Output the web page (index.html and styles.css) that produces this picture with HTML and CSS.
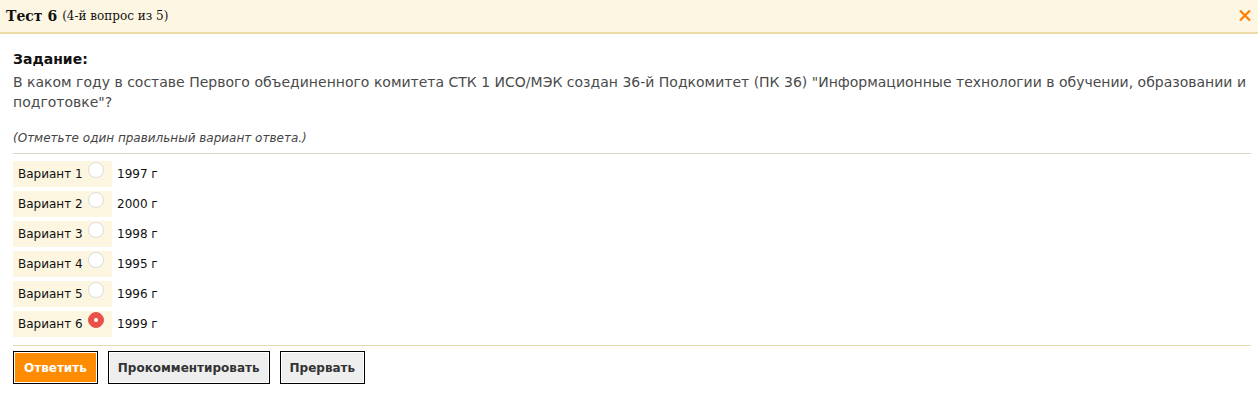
FILE: index.html
```html
<!DOCTYPE html>
<html lang="ru">
<head>
    <meta charset="UTF-8">
    <title>Тест 6</title>
    <link rel="stylesheet" href="styles.css">
</head>
<body>
    <div class="header">
        <span class="title">Тест 6</span>
        <span class="subtitle">(4-й вопрос из 5)</span>
        <svg class="close" width="12" height="11" viewBox="0 0 12 11"><path d="M1 0.5 L11 10.5 M11 0.5 L1 10.5" stroke="#ff8000" stroke-width="2.2"/></svg>
    </div>

    <div class="content">
        <div class="task-label">Задание:</div>
        <p class="question">В каком году в составе Первого объединенного комитета СТК 1 ИСО/МЭК создан 36-й Подкомитет (ПК 36) "Информационные технологии в обучении, образовании и подготовке"?</p>
        <p class="note">(Отметьте один правильный вариант ответа.)</p>

        <div class="options">
            <label class="option"><span class="variant">Вариант 1 <span class="radio"></span></span><span class="answer">1997 г</span></label>
            <label class="option"><span class="variant">Вариант 2 <span class="radio"></span></span><span class="answer">2000 г</span></label>
            <label class="option"><span class="variant">Вариант 3 <span class="radio"></span></span><span class="answer">1998 г</span></label>
            <label class="option"><span class="variant">Вариант 4 <span class="radio"></span></span><span class="answer">1995 г</span></label>
            <label class="option"><span class="variant">Вариант 5 <span class="radio"></span></span><span class="answer">1996 г</span></label>
            <label class="option"><span class="variant">Вариант 6 <span class="radio checked"></span></span><span class="answer">1999 г</span></label>
        </div>

        <div class="buttons">
            <button class="btn primary">Ответить</button>
            <button class="btn">Прокомментировать</button>
            <button class="btn">Прервать</button>
        </div>
    </div>
</body>
</html>
```

FILE: styles.css
```css
body {
    margin: 0;
    font-family: "DejaVu Sans", sans-serif;
    background: #fff;
}
.header {
    height: 32px;
    background-color: #fdf6e3;
    border-bottom: 2px solid #ecdcaa;
    display: flex;
    align-items: center;
    padding: 0 7px 0 6px;
    font-family: "DejaVu Serif", serif;
    color: #111;
}
.title {
    font-weight: bold;
    font-size: 14px;
    margin-right: 5px;
}
.subtitle {
    font-size: 12px;
}
.close {
    margin-left: auto;
    margin-top: -1px;
}
.content {
    padding: 15px 7px 0 13px;
}
.task-label {
    font-weight: bold;
    font-size: 14px;
    color: #111;
    line-height: 20px;
}
.question {
    margin: 3px 0 0;
    font-size: 14px;
    line-height: 20px;
    color: #4a4a4a;
}
.note {
    margin: 18px 0 0;
    font-size: 12px;
    font-style: italic;
    color: #444;
    line-height: 16px;
    padding-bottom: 7px;
    border-bottom: 1px solid #dcd6c8;
}
.options {
    padding: 7px 0 8px;
    border-bottom: 1px solid #e8dab0;
}
.option {
    display: flex;
    align-items: center;
    height: 26px;
    margin-bottom: 4px;
    font-size: 12px;
    color: #111;
}
.option:last-child {
    margin-bottom: 0;
}
.variant {
    display: flex;
    align-items: center;
    width: 94px;
    height: 26px;
    padding-left: 5px;
    background-color: #fcf5e0;
}
.radio {
    display: inline-block;
    width: 14px;
    height: 14px;
    margin: -8px 0 0 5px;
    border: 1px solid #dcdcdc;
    border-radius: 50%;
    background: #fff;
    position: relative;
}
.radio.checked {
    background: #e8524b;
    border-color: #e8524b;
}
.radio.checked::after {
    content: "";
    position: absolute;
    left: 5px;
    top: 5px;
    width: 4px;
    height: 4px;
    border-radius: 50%;
    background: #fff;
}
.answer {
    margin-left: 5px;
}
.buttons {
    display: flex;
    gap: 10px;
    padding-top: 5px;
}
.btn {
    height: 33px;
    padding: 0 9px;
    border: 1px solid #000;
    box-shadow: inset 0 0 0 1px #fff;
    background-color: #eeeeee;
    color: #333;
    font-family: "DejaVu Sans", sans-serif;
    font-weight: bold;
    font-size: 12px;
    cursor: pointer;
}
.btn.primary {
    padding: 0 10px;
    background-color: #ff8c00;
    color: #fff;
}
```
